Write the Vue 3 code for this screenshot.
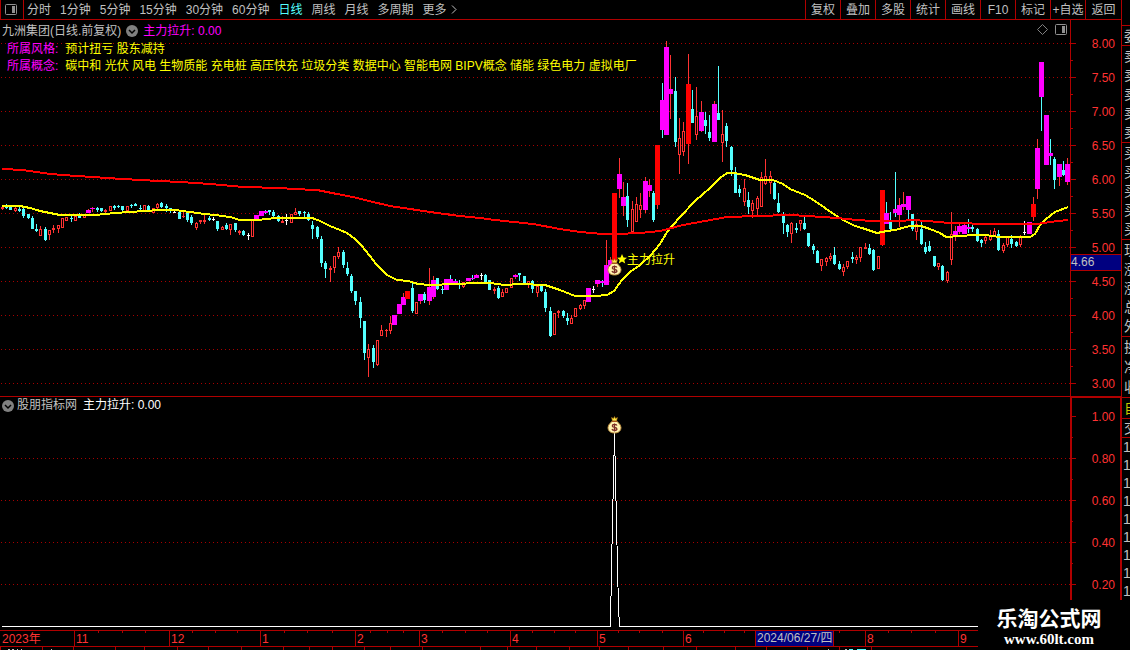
<script setup>
import { ref } from 'vue'

const periods = ['分时', '1分钟', '5分钟', '15分钟', '30分钟', '60分钟', '日线', '周线', '月线', '多周期', '更多']
const active = ref('日线')
const tools = ['复权', '叠加', '多股', '统计', '画线', 'F10', '标记', '+自选', '返回']

const priceLabels = ['8.00', '7.50', '7.00', '6.50', '6.00', '5.50', '5.00', '4.50', '4.00', '3.50', '3.00']
const valueLabels = ['1.00', '0.80', '0.60', '0.40', '0.20']

const quoteGroups = [
  { size: 'head', rows: ['委'] },
  { size: 'five', rows: ['卖', '卖', '卖', '卖', '卖'] },
  { size: 'five', rows: ['买', '买', '买', '买', '买'] },
  { size: 'five', rows: ['现', '涨', '涨', '总', '外'] },
  { size: 'three', rows: ['换', '净', '收'] },
  { size: 'own', rows: ['自'] },
  { size: 'deal', rows: ['交'] }
]

// x, high, low, body top, body bottom, kind
// u 阳线  d 阴线  m/c 主力控盘(红/青影线)  r 涨停  x 十字星
const candles = [
  [2, 206, 210, 207, 209, 'u'], [6, 204, 209, 205, 208, 'd'], [10, 207, 210, 207, 210, 'd'], [15, 206, 212, 208, 211, 'u'],
  [19, 207, 212, 209, 211, 'd'], [23, 208, 218, 209, 216, 'd'], [28, 214, 219, 214, 218, 'd'], [32, 216, 229, 218, 229, 'd'],
  [36, 224, 232, 229, 231, 'd'], [40, 226, 236, 229, 236, 'u'], [45, 227, 241, 229, 240, 'd'], [49, 230, 240, 230, 235, 'u'],
  [53, 225, 233, 228, 230, 'u'], [58, 225, 233, 225, 229, 'u'], [62, 218, 228, 218, 228, 'u'], [66, 217, 221, 217, 221, 'u'],
  [71, 216, 222, 218, 219, 'd'], [75, 216, 221, 216, 221, 'u'], [79, 213, 218, 215, 218, 'd'], [84, 214, 218, 215, 218, 'u'],
  [88, 209, 213, 210, 213, 'm'], [92, 207, 212, 208, 209, 'm'], [97, 207, 212, 208, 210, 'd'], [101, 208, 212, 208, 211, 'd'],
  [105, 209, 213, 210, 212, 'u'], [110, 206, 211, 206, 211, 'u'], [114, 205, 210, 206, 208, 'd'], [118, 205, 208, 206, 207, 'd'],
  [122, 206, 211, 206, 210, 'd'], [127, 206, 211, 206, 211, 'u'], [131, 204, 208, 205, 206, 'd'], [135, 203, 206, 204, 206, 'd'],
  [140, 205, 210, 208, 209, 'd'], [144, 205, 211, 205, 211, 'u'], [148, 205, 211, 206, 210, 'd'], [153, 208, 213, 208, 213, 'u'],
  [157, 203, 209, 204, 208, 'u'], [161, 202, 208, 203, 207, 'd'], [166, 204, 212, 206, 208, 'd'], [170, 208, 213, 208, 210, 'd'],
  [174, 211, 213, 212, 213, 'x'], [179, 212, 219, 212, 219, 'd'], [183, 211, 218, 216, 217, 'u'], [187, 212, 222, 212, 220, 'd'],
  [191, 215, 225, 217, 223, 'd'], [196, 222, 230, 223, 228, 'u'], [200, 220, 224, 220, 222, 'u'], [204, 214, 224, 220, 222, 'u'],
  [209, 216, 221, 218, 220, 'd'], [213, 217, 221, 219, 220, 'x'], [217, 221, 231, 221, 229, 'd'], [222, 226, 230, 227, 230, 'u'],
  [226, 223, 230, 225, 229, 'd'], [230, 224, 235, 224, 230, 'u'], [235, 223, 232, 223, 230, 'd'], [239, 230, 235, 231, 233, 'u'],
  [243, 230, 236, 231, 235, 'd'], [248, 233, 240, 235, 236, 'x'], [252, 220, 237, 220, 237, 'u'], [256, 215, 219, 215, 219, 'm'],
  [261, 211, 216, 211, 216, 'm'], [265, 210, 214, 211, 213, 'c'], [269, 210, 215, 210, 212, 'd'], [273, 210, 218, 212, 216, 'd'],
  [278, 215, 222, 216, 221, 'd'], [282, 216, 223, 221, 223, 'u'], [286, 214, 225, 220, 221, 'x'], [291, 214, 223, 214, 223, 'u'],
  [295, 208, 215, 212, 215, 'u'], [299, 211, 216, 211, 214, 'd'], [304, 211, 217, 212, 213, 'd'], [308, 212, 221, 214, 220, 'd'],
  [312, 221, 239, 225, 229, 'd'], [317, 226, 239, 227, 237, 'd'], [321, 236, 267, 239, 263, 'd'], [325, 261, 278, 263, 269, 'd'],
  [330, 266, 282, 268, 270, 'u'], [334, 256, 273, 256, 268, 'u'], [338, 247, 259, 252, 257, 'u'], [343, 250, 268, 252, 265, 'd'],
  [347, 262, 276, 268, 274, 'd'], [351, 274, 293, 276, 291, 'd'], [355, 291, 305, 291, 301, 'd'], [360, 297, 328, 302, 318, 'd'],
  [364, 321, 360, 321, 353, 'd'], [368, 344, 377, 349, 358, 'u'], [373, 345, 368, 348, 362, 'd'], [377, 340, 366, 340, 365, 'u'],
  [381, 325, 336, 330, 336, 'u'], [386, 329, 337, 330, 331, 'u'], [390, 316, 334, 323, 331, 'u'], [394, 315, 325, 315, 325, 'm'],
  [399, 304, 314, 304, 314, 'm'], [403, 293, 305, 297, 305, 'm'], [407, 291, 299, 291, 299, 'r'], [412, 283, 313, 288, 311, 'd'],
  [416, 302, 314, 302, 314, 'u'], [420, 294, 304, 294, 301, 'm'], [424, 292, 303, 294, 300, 'd'], [429, 268, 305, 287, 301, 'm'],
  [433, 276, 299, 280, 297, 'm'], [437, 278, 290, 278, 289, 'd'], [442, 286, 294, 289, 290, 'd'], [446, 279, 290, 279, 290, 'm'],
  [450, 275, 284, 279, 283, 'c'], [455, 279, 283, 281, 283, 'c'], [459, 280, 289, 283, 284, 'd'], [463, 282, 288, 282, 287, 'u'],
  [468, 278, 281, 278, 281, 'm'], [472, 275, 280, 278, 279, 'c'], [476, 274, 278, 275, 278, 'm'], [481, 273, 280, 275, 276, 'x'],
  [485, 274, 283, 275, 282, 'd'], [489, 280, 290, 280, 290, 'd'], [494, 287, 294, 289, 291, 'u'], [498, 286, 299, 288, 298, 'd'],
  [502, 289, 297, 292, 297, 'u'], [506, 288, 293, 288, 293, 'u'], [511, 278, 288, 278, 288, 'u'], [515, 274, 279, 275, 277, 'm'],
  [519, 273, 281, 273, 275, 'd'], [524, 276, 285, 276, 285, 'd'], [528, 281, 288, 281, 284, 'u'], [532, 280, 293, 281, 289, 'd'],
  [537, 285, 297, 286, 293, 'u'], [541, 285, 292, 285, 291, 'd'], [545, 289, 312, 292, 308, 'd'], [550, 307, 337, 311, 336, 'd'],
  [554, 313, 335, 313, 335, 'u'], [558, 310, 318, 311, 313, 'u'], [563, 310, 318, 311, 316, 'd'], [567, 313, 325, 318, 321, 'd'],
  [571, 315, 324, 318, 324, 'u'], [575, 308, 317, 308, 317, 'u'], [580, 304, 310, 305, 309, 'u'], [584, 300, 309, 300, 306, 'u'],
  [588, 288, 302, 288, 302, 'm'], [593, 286, 293, 289, 290, 'x'], [597, 280, 287, 280, 284, 'm'], [602, 280, 287, 281, 283, 'c'],
  [606, 240, 285, 265, 285, 'm'], [610, 257, 265, 260, 265, 'm'], [614, 193, 262, 193, 262, 'r'], [619, 158, 198, 174, 189, 'm'],
  [623, 182, 216, 197, 206, 'm'], [627, 183, 227, 196, 220, 'd'], [632, 201, 232, 209, 232, 'u'], [636, 197, 222, 204, 222, 'u'],
  [640, 193, 218, 205, 210, 'u'], [645, 177, 213, 181, 210, 'm'], [649, 179, 197, 185, 191, 'm'], [653, 191, 222, 193, 220, 'd'],
  [657, 145, 209, 145, 205, 'r'], [662, 83, 138, 100, 130, 'c'], [666, 41, 135, 47, 135, 'm'], [670, 55, 119, 89, 94, 'm'],
  [675, 77, 147, 91, 142, 'd'], [679, 118, 174, 138, 155, 'u'], [683, 122, 156, 131, 152, 'u'], [688, 54, 164, 84, 144, 'r'],
  [692, 90, 123, 109, 123, 'd'], [696, 87, 140, 116, 135, 'u'], [701, 101, 132, 112, 131, 'm'], [705, 112, 134, 120, 126, 'd'],
  [709, 115, 141, 132, 138, 'd'], [714, 101, 142, 104, 142, 'm'], [718, 66, 120, 113, 120, 'd'], [722, 110, 162, 134, 143, 'u'],
  [726, 123, 147, 126, 141, 'd'], [731, 146, 176, 147, 170, 'd'], [735, 167, 193, 172, 193, 'd'], [739, 185, 197, 189, 193, 'd'],
  [744, 179, 206, 188, 202, 'u'], [748, 192, 214, 200, 207, 'd'], [752, 200, 218, 203, 211, 'u'], [757, 196, 215, 198, 209, 'u'],
  [761, 172, 207, 177, 207, 'u'], [765, 159, 185, 176, 184, 'u'], [770, 171, 194, 176, 183, 'u'], [774, 180, 200, 183, 199, 'd'],
  [778, 193, 213, 203, 212, 'd'], [783, 212, 234, 215, 223, 'd'], [787, 224, 237, 225, 232, 'd'], [791, 222, 243, 223, 234, 'u'],
  [796, 223, 233, 228, 230, 'd'], [800, 220, 231, 220, 224, 'u'], [804, 216, 230, 223, 229, 'd'], [808, 233, 247, 233, 246, 'd'],
  [813, 244, 254, 246, 250, 'd'], [817, 250, 263, 251, 263, 'd'], [821, 259, 271, 259, 266, 'u'], [826, 257, 266, 258, 262, 'u'],
  [830, 253, 261, 256, 259, 'u'], [834, 247, 265, 255, 264, 'd'], [839, 261, 270, 264, 269, 'd'], [843, 264, 276, 267, 272, 'u'],
  [847, 261, 269, 261, 267, 'u'], [852, 252, 263, 257, 259, 'd'], [856, 255, 264, 257, 260, 'u'], [860, 247, 262, 247, 258, 'u'],
  [865, 243, 249, 247, 249, 'u'], [869, 244, 255, 248, 254, 'd'], [873, 249, 271, 250, 270, 'd'], [878, 256, 269, 256, 269, 'u'],
  [882, 190, 246, 190, 245, 'r'], [886, 202, 224, 213, 224, 'c'], [890, 212, 230, 221, 229, 'd'], [895, 172, 217, 209, 213, 'c'],
  [899, 198, 227, 205, 215, 'm'], [903, 192, 210, 204, 207, 'm'], [908, 196, 219, 196, 210, 'c'], [912, 214, 231, 214, 229, 'd'],
  [916, 221, 240, 224, 232, 'u'], [921, 221, 245, 229, 244, 'd'], [925, 242, 254, 247, 252, 'd'], [929, 241, 252, 246, 251, 'd'],
  [934, 256, 267, 256, 266, 'd'], [938, 263, 270, 263, 267, 'u'], [942, 265, 281, 266, 280, 'd'], [947, 271, 283, 272, 281, 'u'],
  [951, 212, 265, 234, 260, 'u'], [955, 226, 241, 231, 236, 'm'], [959, 224, 234, 226, 232, 'm'], [964, 223, 234, 225, 234, 'm'],
  [968, 219, 233, 227, 229, 'c'], [972, 225, 232, 227, 229, 'd'], [977, 228, 242, 229, 241, 'd'], [981, 239, 247, 240, 243, 'd'],
  [985, 236, 244, 237, 241, 'u'], [990, 230, 241, 236, 240, 'u'], [994, 228, 237, 231, 236, 'u'], [998, 230, 251, 234, 250, 'd'],
  [1003, 243, 253, 245, 251, 'u'], [1007, 237, 247, 237, 245, 'u'], [1011, 235, 248, 239, 244, 'd'], [1016, 241, 247, 242, 246, 'd'],
  [1020, 235, 247, 237, 245, 'u'], [1024, 221, 235, 232, 233, 'x'], [1029, 222, 234, 222, 234, 'm'], [1033, 197, 221, 204, 217, 'r'],
  [1037, 139, 199, 148, 189, 'm'], [1041, 62, 131, 62, 97, 'c'], [1046, 115, 165, 115, 165, 'm'], [1050, 139, 165, 153, 156, 'c'],
  [1054, 157, 189, 159, 180, 'd'], [1059, 164, 186, 164, 177, 'm'], [1063, 161, 176, 170, 175, 'd'], [1067, 158, 185, 164, 182, 'm']
].map(([x, high, low, top, bottom, kind]) => ({ x, high, low, top, bottom, kind }))

const wickColors = { u: '#ff3232', d: '#54ffff', m: '#ff3232', c: '#54ffff', r: '#ff3232', x: '#ffffff' }
const bodyColors = { u: '#ff3232', d: '#54ffff', m: '#ff00ff', c: '#ff00ff', r: '#ff0000', x: '#ffffff' }

function isHollow(c) {
  return c.kind === 'u' && c.bottom - c.top > 2
}

function bodyWidth(c) {
  return 'mcr'.includes(c.kind) ? 5 : 3
}

const shortMa = '2,206 20,206 30,208 40,211 50,213 60,215 95,215 115,213 130,212 145,211 160,210 175,210 190,212 205,214 215,215 230,217 240,220 258,220 275,218 312,218 320,221 330,226 340,230 347,233 355,239 361,245 370,256 376,264 387,275 397,280 408,281 418,284 430,285 455,284 478,283 490,283 505,285 520,284 545,285 560,290 575,296 595,296 607,295 614,291 622,280 630,272 640,265 650,256 660,244 667,232 680,217 695,201 710,188 720,178 727,173 734,173 745,175 760,180 773,180 783,184 790,189 805,195 815,201 825,208 835,215 845,221 855,226 865,229 877,233 887,231 895,230 910,226 921,226 930,229 940,233 946,237 960,236 975,235 985,235 1000,237 1030,237 1035,234 1040,225 1046,219 1055,212 1068,207'
const longMa = '2,169 23,170 50,174 77,176 107,178 140,180 180,182 210,184 243,187 280,188 293,189 317,190 337,194 353,197 373,202 390,206 410,209 437,213 460,216 480,218 495,220 533,224 560,229 580,232 603,234 617,234 640,233 660,231 683,225 727,217 757,216 790,215 807,216 837,218 857,220 873,221 900,221 913,220 927,221 950,223 993,224 1037,224 1050,222 1068,220'

const months = [
  { x: 0, text: '2023年' }, { x: 74, text: '11' }, { x: 169, text: '12' }, { x: 260, text: '1' },
  { x: 355, text: '2' }, { x: 419, text: '3' }, { x: 510, text: '4' }, { x: 597, text: '5' },
  { x: 683, text: '6' }, { x: 865, text: '8' }, { x: 958, text: '9' }
]
const weekTicks = [98, 122, 145, 192, 215, 237, 284, 307, 332, 370, 387, 403, 442, 465, 487, 532, 554, 575, 618, 639, 662, 703, 724, 744, 839, 888, 911, 935]
const tabTicks = [0, 42, 73, 115, 144, 177, 208, 241, 283, 309, 332, 364, 390, 422, 480, 507, 536, 569, 599, 628, 663, 696, 735, 766, 807, 839, 871]
</script>

<template>
  <div class="app">
    <main class="terminal">
      <header class="toolbar">
        <button class="panel-btn" aria-label="侧栏">
          <svg width="12" height="11" viewBox="0 0 12 11">
            <rect x=".5" y=".5" width="11" height="10" rx="1" fill="none" stroke="#909090" />
            <rect x="7" y="2" width="3" height="7" fill="#909090" />
          </svg>
        </button>
        <nav class="periods">
          <button v-for="p in periods" :key="p" :class="{ active: p === active }" @click="active = p">
            {{ p }}<svg v-if="p === '更多'" class="more" width="6" height="9" viewBox="0 0 6 9">
              <path d="M1 .5 5 4.500 1 8.500" fill="none" stroke="#c0c0c0" />
            </svg>
          </button>
        </nav>
        <div class="tools">
          <button v-for="t in tools" :key="t">{{ t }}</button>
        </div>
      </header>

      <section class="panel price">
        <div class="chart">
          <svg class="plot" width="100%" height="376">
            <g transform="translate(0 -20)" shape-rendering="crispEdges">
              <line
                v-for="(p, i) in priceLabels"
                :key="p"
                class="grid"
                x1="1"
                x2="100%"
                :y1="43.5 + i * 34"
                :y2="43.5 + i * 34"
              />
              <g v-for="c in candles" :key="c.x">
                <rect :x="c.x" :y="c.high" width="1" :height="c.low - c.high" :fill="wickColors[c.kind]" />
                <rect
                  v-if="isHollow(c)"
                  :x="c.x - 0.5"
                  :y="c.top + 0.5"
                  width="2"
                  :height="c.bottom - c.top - 1"
                  fill="#000"
                  stroke="#ff3232"
                />
                <rect
                  v-else
                  :x="c.x - (bodyWidth(c) - 1) / 2"
                  :y="c.top"
                  :width="bodyWidth(c)"
                  :height="c.bottom - c.top"
                  :fill="bodyColors[c.kind]"
                />
              </g>
              <polyline class="ma" :points="shortMa" stroke="#ffff00" />
              <polyline class="ma" :points="longMa" stroke="#ff0000" />
            </g>
            <path d="m622 234 1.500 3.500 3.500.3-2.700 2.300.9 3.500-3.200-2-3.200 2 .9-3.500-2.700-2.300 3.500-.3z" fill="#ffff00" />
            <text class="signal" x="627" y="244">主力拉升</text>
            <use href="#bag" x="607" y="238" />
          </svg>

          <div class="legend">
            <div class="legend-title">
              <span>九洲集团(日线.前复权)</span>
              <button class="fold" aria-label="展开">
                <svg width="12" height="12" viewBox="0 0 12 12">
                  <circle cx="6" cy="6" r="6" fill="#808080" />
                  <path d="m3 5 3 3 3-3" fill="none" stroke="#000" stroke-width="1.500" />
                </svg>
              </button>
              <span class="magenta">主力拉升: 0.00</span>
            </div>
            <div class="legend-row">
              <span class="magenta">所属风格:</span>
              <span>预计扭亏 股东减持</span>
            </div>
            <div class="legend-row">
              <span class="magenta">所属概念:</span>
              <span>碳中和 光伏 风电 生物质能 充电桩 高压快充 垃圾分类 数据中心 智能电网 BIPV概念 储能 绿色电力 虚拟电厂</span>
            </div>
          </div>

          <div class="corner">
            <svg width="11" height="11" viewBox="0 0 11 11">
              <path d="M5.500.5l5 5-5 5-5-5z" fill="none" stroke="#808080" />
            </svg>
            <svg width="12" height="11" viewBox="0 0 12 11">
              <rect x=".5" y=".5" width="11" height="10" rx="1" fill="none" stroke="#909090" />
              <rect x="7" y="2" width="3" height="7" fill="#909090" />
            </svg>
          </div>
        </div>

        <svg class="axis" width="51" height="376">
          <g transform="translate(0 -20)">
            <g shape-rendering="crispEdges" fill="#b00000">
              <rect x="0" y="20" width="1" height="376" />
              <template v-for="(p, i) in priceLabels" :key="p">
                <rect x="0" :y="43 + i * 34" width="6" height="1" />
                <rect v-if="i < 10" x="0" :y="60 + i * 34" width="3" height="1" />
              </template>
            </g>
            <text v-for="(p, i) in priceLabels" :key="p" x="45" :y="48 + i * 34">{{ p }}</text>
            <rect x="0.500" y="254.500" width="51" height="16" fill="#000080" stroke="#b00000" />
            <text class="cursor-price" x="1" y="266">4.66</text>
          </g>
        </svg>
      </section>

      <section class="panel indicator">
        <div class="chart">
          <svg class="plot" width="100%" height="233">
            <g shape-rendering="crispEdges">
              <line v-for="i in 4" :key="i" class="grid" x1="1" x2="100%" :y1="19.5 + i * 42" :y2="19.5 + i * 42" />
              <path
                d="M2 229.500H610.500L611.500 170 614.500 36 617.500 170 618.500 209 619.500 229.500H1070"
                fill="none"
                stroke="#fff"
              />
            </g>
            <use href="#bag" x="607" y="19" />
          </svg>
          <div class="legend">
            <div class="sub-title">
              <button class="fold" aria-label="展开">
                <svg width="12" height="12" viewBox="0 0 12 12">
                  <circle cx="6" cy="6" r="6" fill="#808080" />
                  <path d="m3 5 3 3 3-3" fill="none" stroke="#000" stroke-width="1.500" />
                </svg>
              </button>
              <span>股朋指标网</span>
              <span class="value">主力拉升: 0.00</span>
            </div>
          </div>
        </div>

        <svg class="axis" width="51" height="233">
          <g shape-rendering="crispEdges" fill="#b00000">
            <rect x="0" y="0" width="51" height="1" />
            <rect x="0" y="0" width="2" height="233" />
            <rect x="50" y="0" width="1" height="233" />
            <template v-for="(v, i) in valueLabels" :key="v">
              <rect x="0" :y="19 + i * 42" width="6" height="1" />
              <rect x="0" :y="40 + i * 42" width="3" height="1" />
            </template>
          </g>
          <text v-for="(v, i) in valueLabels" :key="v" x="45" :y="24 + i * 42">{{ v }}</text>
        </svg>
      </section>

      <footer class="timeline">
        <svg width="100%" height="20">
          <g shape-rendering="crispEdges" fill="#b00000">
            <rect x="0" y="0" width="100%" height="1" />
            <rect x="0" y="16" width="100%" height="1" />
            <rect v-for="m in months.slice(1)" :key="m.x" :x="m.x" y="0" width="1" height="16" />
            <rect v-for="t in weekTicks" :key="t" :x="t" y="1" width="1" height="2" />
            <rect v-for="t in tabTicks" :key="t" :x="t" y="17" width="1" height="3" />
          </g>
          <text v-for="m in months" :key="m.x" :x="m.x + 2" y="13">{{ m.text }}</text>
          <rect x="755.500" y="0.500" width="78" height="16" fill="#000080" stroke="#b00000" />
          <text class="cursor-date" x="757" y="12">2024/06/27/四</text>
          <g fill="#c0c0c0" shape-rendering="crispEdges">
            <rect x="8" y="19" width="2" height="1" />
            <rect x="12" y="19" width="2" height="1" />
            <rect x="17" y="19" width="1" height="1" />
            <rect x="21" y="19" width="1" height="1" />
            <rect x="51" y="19" width="1" height="1" />
            <rect x="828" y="19" width="1" height="1" />
            <rect x="845" y="19" width="2" height="1" />
            <rect x="849" y="19" width="4" height="1" fill="#54ffff" />
            <rect x="857" y="19" width="9" height="1" fill="#54ffff" />
          </g>
        </svg>
      </footer>
    </main>

    <aside class="quotes">
      <div v-for="(g, i) in quoteGroups" :key="i" class="quote-group" :class="g.size">
        <span v-for="(r, j) in g.rows" :key="j">{{ r }}</span>
      </div>
      <div class="ticks">
        <span v-for="n in 9" :key="n">1</span>
      </div>
    </aside>

    <div class="brand">
      <strong>乐淘公式网</strong>
      <a href="#">www.60lt.com</a>
    </div>

    <svg class="defs" width="0" height="0">
      <symbol id="bag" width="15" height="18" viewBox="0 0 15 18" overflow="visible">
        <path d="M4.500 1.500 6.500 2.500 7.500.5 8.500 2.500 10.500 1.500 9.500 5h-4z" fill="#ffe640" stroke="#a06a10" stroke-width=".6" />
        <path d="M5.500 5h4c.5 1 4.500 3 4.500 6.500S11.500 17 7.500 17 1 15 1 11.500 5 6 5.500 5z" fill="#fff3b0" stroke="#b98a3c" />
        <path d="M5 5.500h5" stroke="#a8541c" />
        <path d="M10 9.500C9 8 5.300 8 5.300 9.900c0 2 4.600.9 4.600 3 0 2-4 1.900-5 .2M7.500 7.500v8" fill="none" stroke="#7a2c24" stroke-width="1.300" />
      </symbol>
    </svg>
  </div>
</template>

<style>
body {
  background: #000;
}
</style>

<style scoped>
.app {
  position: relative;
  display: flex;
  min-height: 100vh;
  overflow: hidden;
  background: #000;
  color: #c0c0c0;
  font-family: "Liberation Sans", "Noto Sans CJK SC", sans-serif;
  font-size: 12px;
}

button {
  padding: 0;
  border: 0;
  background: none;
  color: inherit;
  font: inherit;
  white-space: nowrap;
  cursor: pointer;
}

svg {
  display: block;
}

.terminal {
  flex: 1;
  min-width: 0;
  display: flex;
  flex-direction: column;
}

.toolbar {
  display: flex;
  height: 19px;
  border-bottom: 1px solid #b00000;
  line-height: 18px;
}

.panel-btn {
  display: flex;
  align-items: center;
  padding: 0 6px 0 4px;
  border-left: 1px solid #b00000;
  border-right: 1px solid #b00000;
}

.periods {
  display: flex;
  gap: 9px;
  flex: 1;
  padding-left: 3px;
}

.periods .active {
  color: #54ffff;
}

.more {
  display: inline-block;
  margin-left: 4px;
}

.tools {
  display: flex;
}

.tools button {
  width: 35px;
  border-left: 1px solid #b00000;
}

.tools button:last-child {
  width: 36px;
}

.panel {
  display: flex;
}

.chart {
  position: relative;
  flex: 1;
  min-width: 0;
}

.plot {
  overflow: hidden;
}

.grid {
  stroke: #a80000;
  stroke-dasharray: 1 3;
}

.ma {
  fill: none;
  stroke-width: 2;
}

.signal {
  fill: #ffff00;
}

.legend {
  position: absolute;
  top: 0;
  left: 0;
  line-height: 17px;
  white-space: nowrap;
}

.price .legend {
  top: 1px;
}

.legend-title {
  display: flex;
  align-items: center;
  gap: 4px;
  height: 20px;
  padding-left: 2px;
}

.legend-row {
  display: flex;
  gap: 7px;
  padding-left: 7px;
  color: #ffff00;
}

.magenta {
  color: #ff00ff;
}

.value {
  margin-left: 4px;
  color: #fff;
}

.fold {
  margin: 0 1px;
}

.sub-title {
  display: flex;
  align-items: center;
  gap: 2px;
  padding-left: 1px;
}

.corner {
  position: absolute;
  top: 4px;
  right: 3px;
  display: flex;
  gap: 7px;
}

.axis {
  flex: none;
}

.axis text {
  fill: #ff3232;
  text-anchor: end;
}

.axis .cursor-price {
  fill: #c0c0c0;
  text-anchor: start;
}

.indicator {
  border-top: 1px solid #b00000;
}

.timeline text {
  fill: #ff3232;
}

.timeline .cursor-date {
  fill: #c0c0c0;
}

.quotes {
  flex: none;
  width: 8px;
  border-left: 1px solid #b00000;
  overflow: hidden;
  padding-top: 25px;
  font-size: 14px;
}

.quote-group {
  display: flex;
  flex-direction: column;
  justify-content: space-around;
  border-top: 1px solid #b00000;
  line-height: 18px;
  padding-left: 2px;
}

.head {
  height: 19px;
}

.five {
  height: 96px;
}

.three {
  height: 60px;
}

.own {
  height: 20px;
  color: #c8c800;
}

.deal {
  height: 18px;
}

.ticks {
  display: flex;
  flex-direction: column;
  padding-left: 1px;
  border-top: 1px solid #b00000;
  line-height: 18px;
}

.brand {
  position: absolute;
  right: 0;
  bottom: 0;
  display: flex;
  flex-direction: column;
  align-items: center;
  width: 142px;
  height: 44px;
  padding: 6px 10px 0 0;
  background: #000;
  color: #fff;
}

.brand strong {
  font-size: 21px;
  line-height: 25px;
}

.brand a {
  color: #fff;
  font-family: "Liberation Serif", serif;
  font-size: 15px;
  font-weight: bold;
  line-height: 16px;
  text-decoration: none;
}

.defs {
  position: absolute;
}
</style>
